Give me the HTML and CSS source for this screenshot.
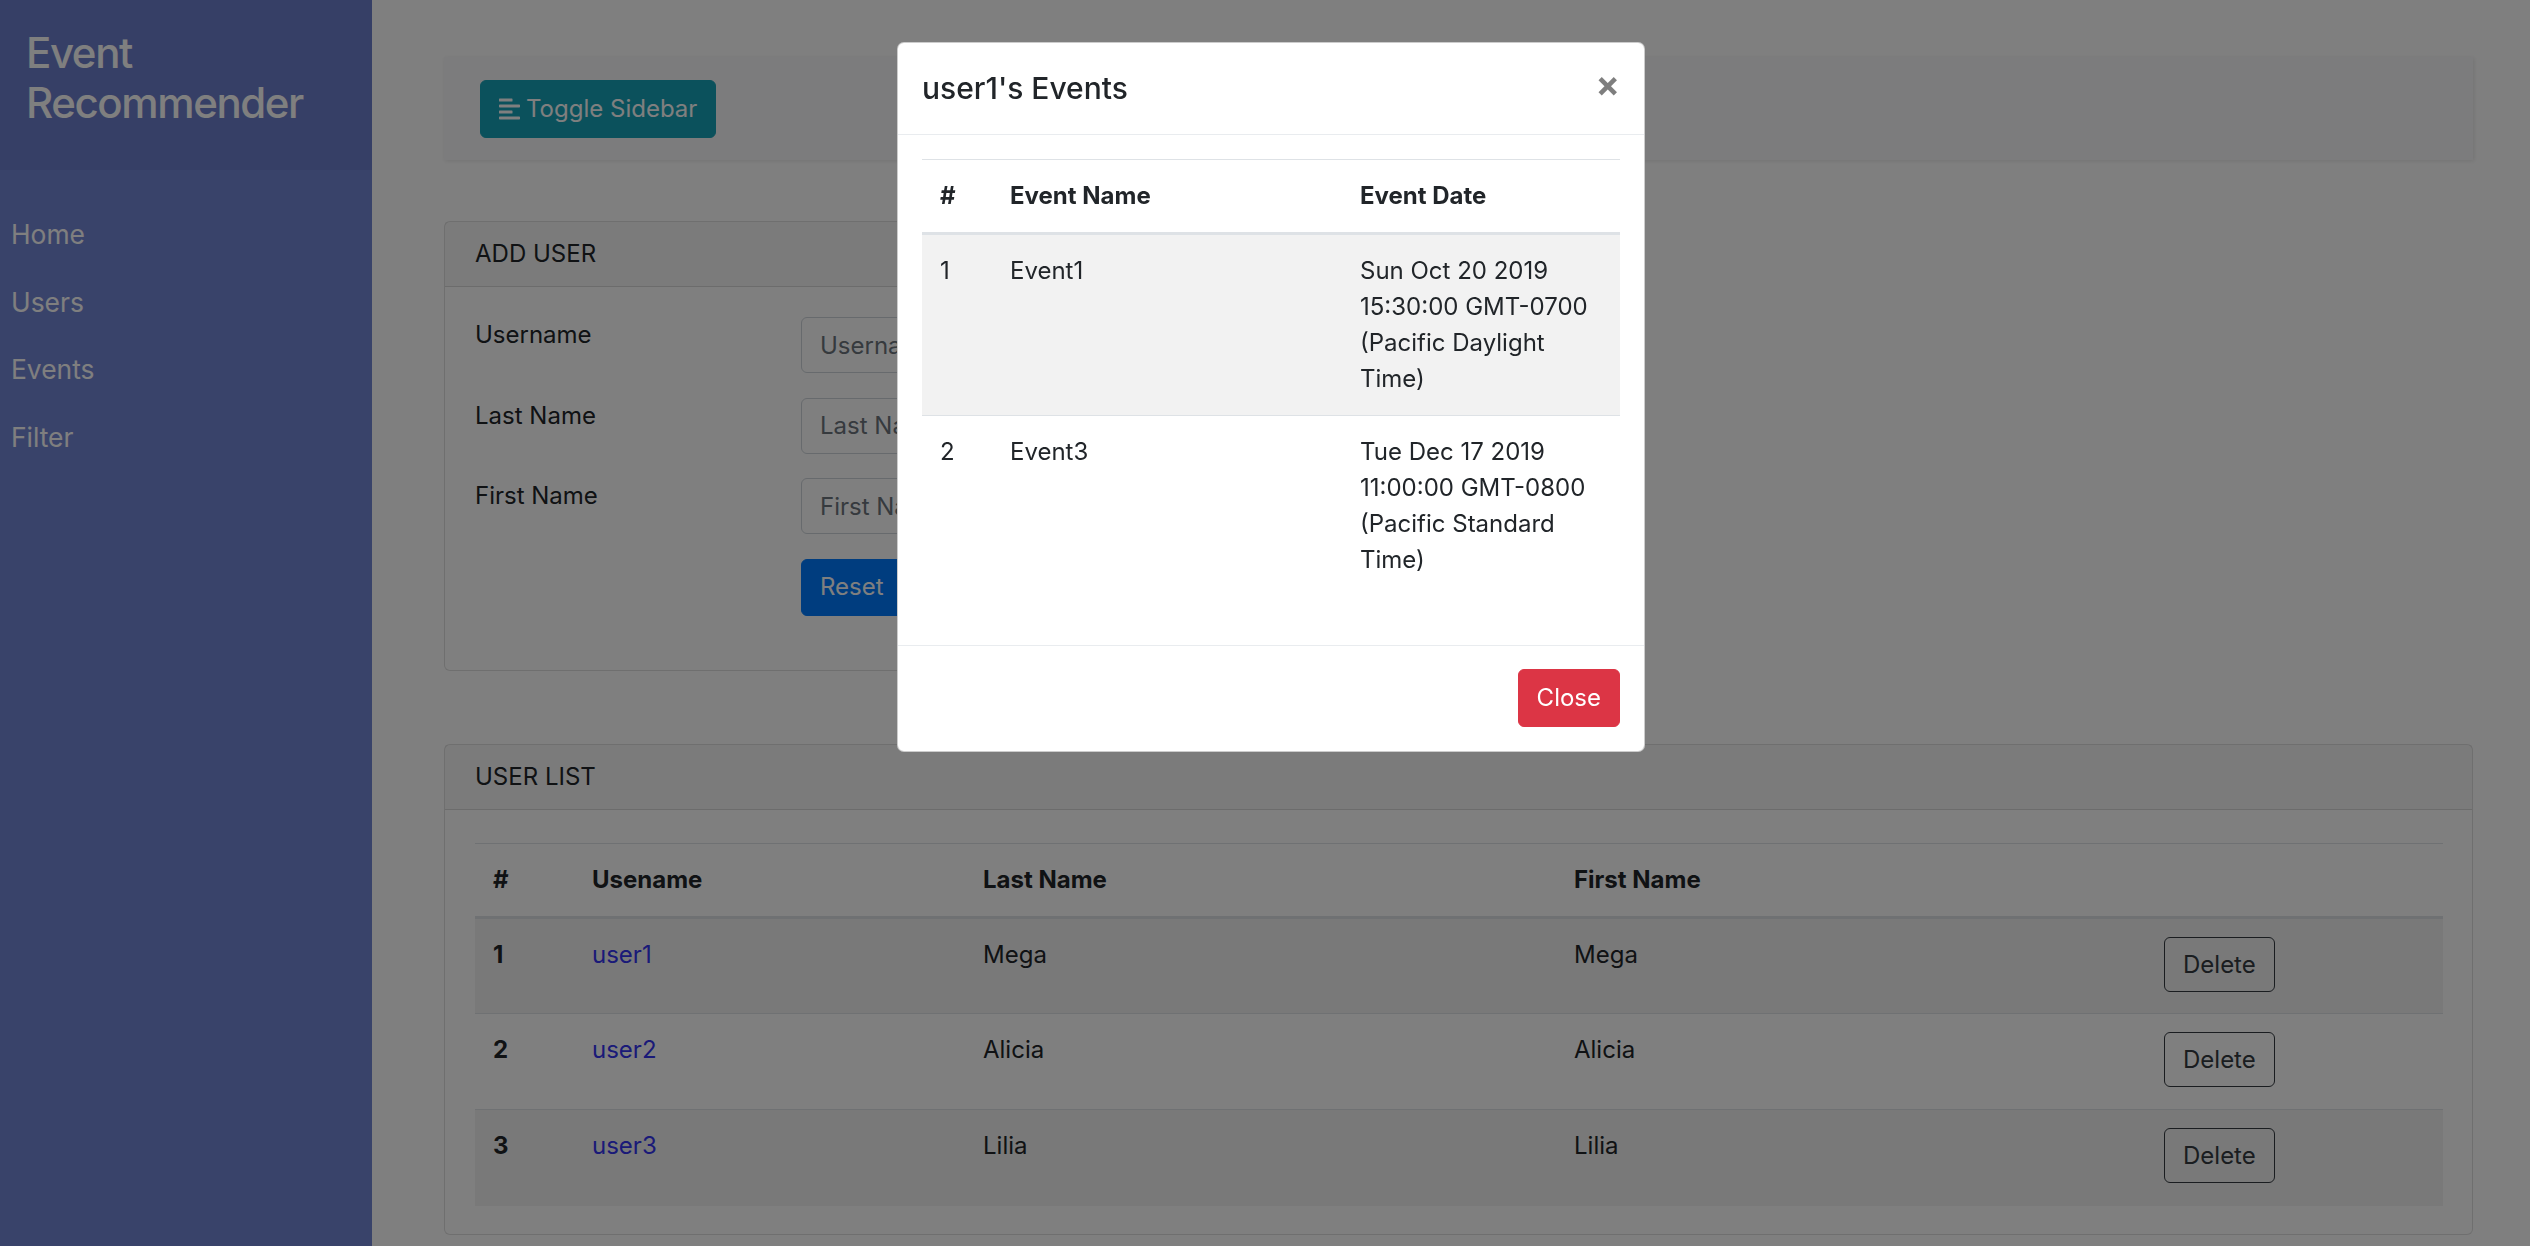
FILE: index.html
```html
<!DOCTYPE html>
<html lang="en">
<head>
<meta charset="utf-8">
<title>Event Recommender</title>
<link rel="stylesheet" href="styles.css">
</head>
<body>
<div class="wrapper">
  <nav class="sidebar">
    <div class="sidebar-header">
      <h3 class="brand">Event Recommender</h3>
    </div>
    <ul class="nav-list">
      <li><a href="#">Home</a></li>
      <li><a href="#">Users</a></li>
      <li><a href="#">Events</a></li>
      <li><a href="#">Filter</a></li>
    </ul>
  </nav>

  <main class="content">
    <div class="topbar">
      <button class="btn btn-info" type="button">
        <svg class="icon-align" viewBox="0 0 448 512" aria-hidden="true"><path fill="currentColor" d="M12.83 352h262.34A12.82 12.82 0 0 0 288 339.17v-38.34A12.82 12.82 0 0 0 275.17 288H12.83A12.82 12.82 0 0 0 0 300.83v38.34A12.82 12.82 0 0 0 12.83 352zm0-256h262.34A12.82 12.82 0 0 0 288 83.17V44.83A12.82 12.82 0 0 0 275.17 32H12.83A12.82 12.82 0 0 0 0 44.83v38.34A12.82 12.82 0 0 0 12.83 96zM432 160H16a16 16 0 0 0-16 16v32a16 16 0 0 0 16 16h416a16 16 0 0 0 16-16v-32a16 16 0 0 0-16-16zm0 256H16a16 16 0 0 0-16 16v32a16 16 0 0 0 16 16h416a16 16 0 0 0 16-16v-32a16 16 0 0 0-16-16z"/></svg>
        <span>Toggle Sidebar</span>
      </button>
    </div>

    <section class="card card-half">
      <div class="card-header">ADD USER</div>
      <div class="card-body">
        <form class="form">
          <div class="form-row">
            <label for="u">Username</label>
            <input id="u" class="form-control" placeholder="Username">
          </div>
          <div class="form-row">
            <label for="l">Last Name</label>
            <input id="l" class="form-control" placeholder="Last Name">
          </div>
          <div class="form-row">
            <label for="f">First Name</label>
            <input id="f" class="form-control" placeholder="First Name">
          </div>
          <div class="form-row">
            <span></span>
            <div class="actions">
              <button class="btn btn-primary" type="reset">Reset</button>
              <button class="btn btn-success" type="button">Add</button>
            </div>
          </div>
        </form>
      </div>
    </section>

    <section class="card card-last">
      <div class="card-header">USER LIST</div>
      <div class="card-body card-body-table">
        <table class="table table-striped users">
          <colgroup>
            <col class="c-num"><col class="c-user"><col class="c-last"><col class="c-first"><col class="c-act">
          </colgroup>
          <thead>
            <tr><th>#</th><th>Usename</th><th>Last Name</th><th>First Name</th><th></th></tr>
          </thead>
          <tbody>
            <tr><th>1</th><td><a class="user-link" href="#">user1</a></td><td>Mega</td><td>Mega</td><td><button class="btn btn-outline-dark" type="button">Delete</button></td></tr>
            <tr><th>2</th><td><a class="user-link" href="#">user2</a></td><td>Alicia</td><td>Alicia</td><td><button class="btn btn-outline-dark" type="button">Delete</button></td></tr>
            <tr><th>3</th><td><a class="user-link" href="#">user3</a></td><td>Lilia</td><td>Lilia</td><td><button class="btn btn-outline-dark" type="button">Delete</button></td></tr>
          </tbody>
        </table>
      </div>
    </section>
  </main>
</div>

<div class="backdrop"></div>

<div class="modal" role="dialog">
  <div class="modal-header">
    <h5 class="modal-title">user1's Events</h5>
    <span class="close">×</span>
  </div>
  <div class="modal-body">
    <table class="table table-striped events">
      <colgroup>
        <col class="e-num"><col class="e-name"><col class="e-date">
      </colgroup>
      <thead>
        <tr><th>#</th><th>Event Name</th><th>Event Date</th></tr>
      </thead>
      <tbody>
        <tr><td>1</td><td>Event1</td><td>Sun Oct 20 2019<br>15:30:00 GMT-0700<br>(Pacific Daylight<br>Time)</td></tr>
        <tr><td>2</td><td>Event3</td><td>Tue Dec 17 2019<br>11:00:00 GMT-0800<br>(Pacific Standard<br>Time)</td></tr>
      </tbody>
    </table>
  </div>
  <div class="modal-footer">
    <button class="btn btn-danger" type="button">Close</button>
  </div>
</div>
</body>
</html>
```

FILE: styles.css
```css
* { box-sizing: border-box; }

html, body {
  margin: 0;
  height: 100%;
}

body {
  font-family: Inter, "Noto Sans", "Liberation Sans", sans-serif;
  font-size: 24px;
  line-height: 36px;
  color: #212529;
  background: #fff;
  overflow: hidden;
}

.wrapper {
  display: flex;
  height: 100vh;
}

/* Sidebar */
.sidebar {
  width: 372px;
  flex: none;
  background: #7386d5;
  color: #fff;
}

.sidebar-header {
  height: 170px;
  padding: 28px 24px 0 26px;
  background: #6d7fcc;
}

.brand {
  margin: 0;
  font-size: 42px;
  line-height: 50px;
  font-weight: 500;
  letter-spacing: -1.4px;
}

.nav-list {
  list-style: none;
  margin: 0;
  padding: 31px 0 0;
}

.nav-list a {
  display: block;
  height: 67.5px;
  line-height: 67.5px;
  padding: 0 11px;
  font-size: 26.4px;
  color: #fff;
  text-decoration: none;
}

/* Content */
.content {
  flex: 1;
  min-width: 0;
  padding: 57px 57px 0 72px;
  overflow: hidden;
}

.topbar {
  background: #f8f9fa;
  padding: 22.5px 36px;
  box-shadow: 1px 1px 4.5px rgba(0, 0, 0, 0.1);
  margin-bottom: 61px;
}

.btn {
  display: inline-flex;
  align-items: center;
  font-family: inherit;
  font-size: 24px;
  line-height: 36px;
  padding: 9px 18px;
  border: 1.5px solid transparent;
  border-radius: 6px;
  color: #fff;
  background: transparent;
  cursor: pointer;
}

.btn-info {
  background: #17a2b8;
  border-color: #17a2b8;
  height: 58px;
  gap: 6px;
}

.icon-align {
  width: 21px;
  height: 24px;
  display: block;
}

.btn-primary {
  background: #007bff;
  border-color: #007bff;
  height: 57px;
}

.btn-success {
  background: #28a745;
  border-color: #28a745;
  height: 57px;
}

.btn-danger {
  background: #dc3545;
  border-color: #dc3545;
  height: 58px;
}

.btn-outline-dark {
  color: #343a40;
  border-color: #343a40;
  height: 55px;
}

/* Cards */
.card {
  border: 1.5px solid rgba(0, 0, 0, 0.125);
  border-radius: 6px;
  margin-bottom: 73px;
  background: #fff;
}

.card-last {
  margin-bottom: 0;
}

.card-half {
  width: 50%;
}

.card-header {
  padding: 14px 30px;
  background: rgba(0, 0, 0, 0.03);
  border-bottom: 1.5px solid rgba(0, 0, 0, 0.125);
}

.card-body {
  padding: 30px;
}

.card-body-table {
  padding-top: 33px;
  padding-bottom: 28px;
}

/* Form */
.form {
  margin: 0;
}

.form-row {
  display: grid;
  grid-template-columns: 326px 1fr;
  align-items: start;
  margin-bottom: 24.5px;
}

.form-control {
  height: 56px;
  padding: 9px 18px;
  font-family: inherit;
  font-size: 24px;
  line-height: 36px;
  color: #495057;
  border: 1.5px solid #ced4da;
  border-radius: 6px;
  background: #fff;
  width: 100%;
}

.form-control::placeholder {
  color: #6c757d;
}

.actions {
  display: flex;
  gap: 12px;
}

/* Tables */
.table {
  width: 100%;
  border-collapse: collapse;
  table-layout: fixed;
}

.table th,
.table td {
  padding: 18px;
  text-align: left;
  vertical-align: top;
  border-top: 1.5px solid #dee2e6;
}

.table thead th {
  vertical-align: bottom;
  border-bottom: 3px solid #dee2e6;
  font-weight: 700;
}

.table tbody th {
  font-weight: 700;
}

.table-striped tbody tr:nth-child(odd) {
  background: rgba(0, 0, 0, 0.05);
}

.users {
  margin: 0;
}

.users tbody tr {
  height: 96px;
}

.c-num { width: 99px; }
.c-user { width: 391px; }
.c-last { width: 591px; }
.c-first { width: 590px; }
.c-act { width: 297px; }

.user-link {
  color: #3434f0;
  text-decoration: none;
}

/* Modal */
.backdrop {
  position: fixed;
  inset: 0;
  background: rgba(0, 0, 0, 0.5);
}

.modal {
  position: fixed;
  top: 42px;
  left: 897px;
  width: 748px;
  background: #fff;
  border: 1.5px solid rgba(0, 0, 0, 0.2);
  border-radius: 7px;
}

.modal-header {
  display: flex;
  justify-content: space-between;
  align-items: flex-start;
  padding: 23px 24px;
  border-bottom: 1.5px solid #e9ecef;
}

.modal-title {
  margin: 0;
  font-size: 30px;
  line-height: 45px;
  font-weight: 500;
}

.close {
  font-size: 36px;
  line-height: 36px;
  font-weight: 700;
  color: #000;
  opacity: 0.5;
}

.modal-body {
  padding: 24px;
}

.events {
  margin-bottom: 25px;
}

.e-num { width: 70px; }
.e-name { width: 350px; }
.e-date { width: 278px; }

.modal-footer {
  display: flex;
  justify-content: flex-end;
  padding: 23px 24px 24px;
  border-top: 1.5px solid #e9ecef;
}
```
